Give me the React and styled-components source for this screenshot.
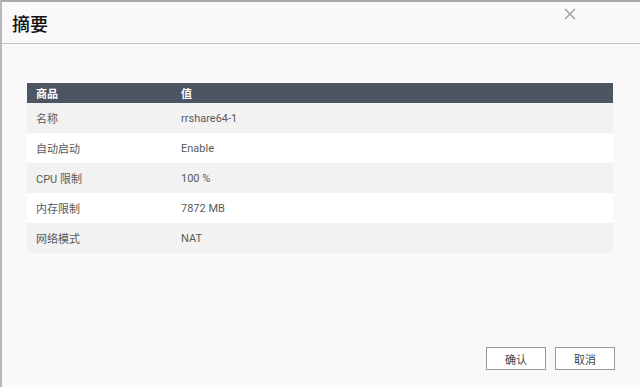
import React from "react"
import styled, { createGlobalStyle } from "styled-components"

const GlobalStyle = createGlobalStyle`
  html, body {
    margin: 0;
    padding: 0;
    background: #f9f9f9;
  }
  body {
    font-family: Roboto, "Noto Sans CJK SC", "Liberation Sans", sans-serif;
  }
`;

const Dialog = styled.div`
  width: 640px;
  height: 387px;
  box-sizing: border-box;
  display: flex;
  flex-direction: column;
  background: #f9f9f9;
  border-top: 2px solid #a9a9a9;
  border-left: 2px solid #b9b9b9;
  position: relative;
`;

const Header = styled.div`
  height: 41px;
  display: flex;
  align-items: center;
  padding-left: 10px;
  border-bottom: 1px solid #c4c4c4;
  font-size: 18px;
  font-weight: 500;
  color: #111;
`;

const Close = styled.button`
  position: absolute;
  top: 5px;
  right: 63px;
  width: 14px;
  height: 14px;
  padding: 0;
  border: 0;
  background: transparent;
  svg { display: block; }
`;

const Body = styled.div`
  flex: 1;
  padding: 39px 25px 0 25px;
  display: flex;
  flex-direction: column;
`;

const Table = styled.div`
  width: 586px;
  display: flex;
  flex-direction: column;
`;

const Row = styled.div`
  display: grid;
  grid-template-columns: 145px 1fr;
  align-items: center;
  height: ${p => (p.$head ? "20px" : "30px")};
  padding-left: 9px;
  background: ${p => (p.$head ? "#4d5563" : p.$odd ? "#f2f2f2" : "#ffffff")};
  color: ${p => (p.$head ? "#ffffff" : "#5a5a5a")};
  font-size: 11px;
  font-weight: ${p => (p.$head ? 700 : 400)};
`;

const Footer = styled.div`
  display: flex;
  justify-content: flex-end;
  gap: 9px;
  padding: 0 25px 17px 0;
`;

const Button = styled.button`
  width: 60px;
  height: 23px;
  box-sizing: border-box;
  border: 1px solid #9a9a9a;
  background: #ffffff;
  color: #444;
  font-family: inherit;
  font-size: 11px;
  padding: 0;
`;

const rows = [
  ["名称", "rrshare64-1"],
  ["自动启动", "Enable"],
  ["CPU 限制", "100 %"],
  ["内存限制", "7872 MB"],
  ["网络模式", "NAT"],
];

export default function App() {
  return (
    <>
      <GlobalStyle />
      <Dialog>
        <Header>摘要</Header>
        <Close aria-label="close">
          <svg width="14" height="14" viewBox="0 0 14 14">
            <path d="M2 2 L12 12 M12 2 L2 12" stroke="#9a9a9a" strokeWidth="1.2" />
          </svg>
        </Close>
        <Body>
          <Table>
            <Row $head>
              <span>商品</span>
              <span>值</span>
            </Row>
            {rows.map(([k, v], i) => (
              <Row key={k} $odd={i % 2 === 0}>
                <span>{k}</span>
                <span>{v}</span>
              </Row>
            ))}
          </Table>
        </Body>
        <Footer>
          <Button>确认</Button>
          <Button>取消</Button>
        </Footer>
      </Dialog>
    </>
  )
}
